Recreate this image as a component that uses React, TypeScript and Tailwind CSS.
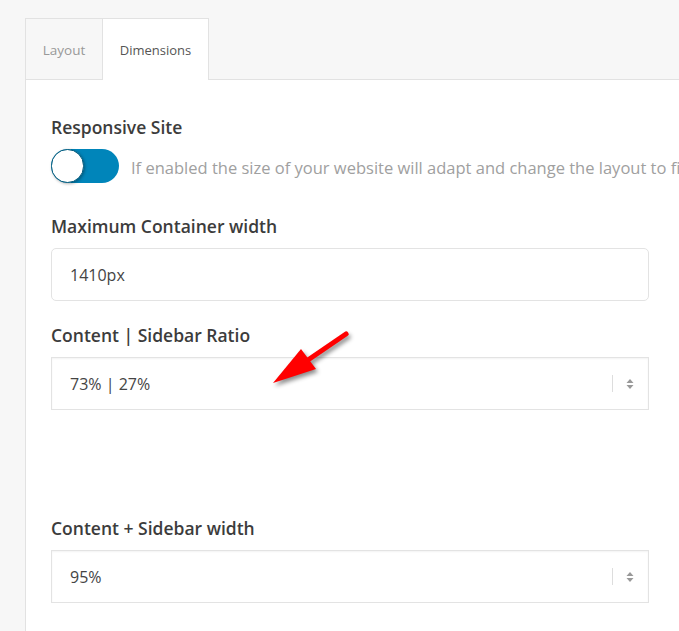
import React from "react";

const font = { fontFamily: '"Open Sans", "Noto Sans", sans-serif' };

function SelectBox({ value }: { value: string }) {
  return (
    <div className="flex items-center h-[53px] w-[598px] border border-[#e3e3e3] shadow-[inset_0_1px_2px_rgba(0,0,0,0.05)] bg-white pl-[18px] pr-[14px]">
      <span className="flex-1 text-[16px] text-[#444]">{value}</span>
      <span className="w-px h-[17px] bg-[#ddd] mr-[13px]" />
      <svg width="8" height="12" viewBox="0 0 8 12" className="text-[#999]">
        <path d="M4 1 L7.5 5 H0.5 Z" fill="currentColor" />
        <path d="M4 11 L7.5 7 H0.5 Z" fill="currentColor" />
      </svg>
    </div>
  );
}

export default function App() {
  return (
    <div className="relative w-full h-[631px] overflow-hidden bg-[#f7f7f7] pt-[18px] pl-[25px]" style={font}>
      {/* tabs */}
      <div className="flex h-[62px]">
        <div className="w-[77px] flex items-center justify-center pt-[3px] border-l border-t border-b border-[#e2e2e2] text-[13.5px] text-[#999]">
          Layout
        </div>
        <div className="w-[107px] flex items-center justify-center pt-[3px] bg-white border-l border-t border-r border-[#e2e2e2] text-[13px] text-[#555]">
          Dimensions
        </div>
        <div className="flex-1 border-b border-[#e2e2e2]" />
      </div>

      {/* panel */}
      <div className="bg-white border-l border-[#e2e2e2] h-full pl-[25px] pt-[35px]">
        <div className="text-[17.5px] font-semibold text-[#3c3c3c] leading-[24px]">Responsive Site</div>
        <div className="flex items-center mt-[10px] whitespace-nowrap">
          <div className="relative w-[68px] h-[34px] rounded-full bg-[#0085ba] shrink-0">
            <div className="absolute left-0 top-0 w-[33px] h-[34px] rounded-full bg-white border border-[#005a7d] shadow-[1px_1px_3px_rgba(0,0,0,0.3)]" />
          </div>
          <span className="relative top-[2px] ml-[12px] text-[16.5px] text-[#a0a0a0]">
            If enabled the size of your website will adapt and change the layout to fit
          </span>
        </div>

        <div className="mt-[31px] text-[17.5px] font-semibold text-[#3c3c3c] leading-[24px]">Maximum Container width</div>
        <div className="mt-[10px] flex items-center h-[53px] w-[598px] rounded-[5px] border border-[#e3e3e3] pl-[18px] text-[16px] text-[#444]">
          1410px
        </div>

        <div className="mt-[22px] text-[17.5px] font-semibold text-[#3c3c3c] leading-[24px]">Content | Sidebar Ratio</div>
        <div className="mt-[10px]">
          <SelectBox value="73% | 27%" />
        </div>

        <div className="mt-[106px] text-[17.5px] font-semibold text-[#3c3c3c] leading-[24px]">Content + Sidebar width</div>
        <div className="mt-[10px]">
          <SelectBox value="95%" />
        </div>
      </div>

      {/* red annotation arrow */}
      <svg
        className="absolute left-[260px] top-[325px] pointer-events-none"
        width="100"
        height="70"
        viewBox="260 325 100 70"
        style={{ filter: "drop-shadow(2px 3px 2px rgba(0,0,0,0.45))" }}
      >
        <line x1="346" y1="334" x2="305" y2="362" stroke="#ff0000" strokeWidth="5" strokeLinecap="round" />
        <polygon points="273,383 301,349 316,369" fill="#ff0000" />
      </svg>
    </div>
  );
}
